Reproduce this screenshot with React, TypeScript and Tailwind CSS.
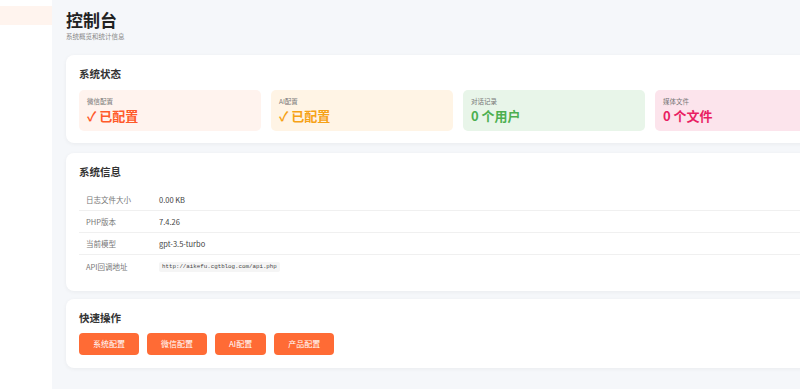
const stats = [
  { label: '微信配置', value: '✓ 已配置', box: 'bg-[#fff3ee]', text: 'text-[#ff5a2a]' },
  { label: 'AI配置', value: '✓ 已配置', box: 'bg-[#fff4e5]', text: 'text-[#f6a216]' },
  { label: '对话记录', value: '0 个用户', box: 'bg-[#e8f5e9]', text: 'text-[#4caf50]' },
  { label: '媒体文件', value: '0 个文件', box: 'bg-[#fce4ec]', text: 'text-[#e91e63]' },
];

const info = [
  { label: '日志文件大小', value: '0.00 KB' },
  { label: 'PHP版本', value: '7.4.26' },
  { label: '当前模型', value: 'gpt-3.5-turbo' },
];

const actions = ['系统配置', '微信配置', 'AI配置', '产品配置'];

export default function App() {
  return (
    <div
      className="w-[800px] h-[389px] overflow-hidden bg-[#f5f7fa]"
      style={{ fontFamily: '"Noto Sans CJK SC", "Noto Sans", sans-serif' }}
    >
      <div className="flex w-[864px] h-full">
        {/* sidebar */}
        <aside className="w-[52px] shrink-0 bg-white pt-[6px]">
          <div className="h-[19px] bg-[#fff4ee]" />
        </aside>

        {/* main */}
        <main className="flex-1 px-[14px] pt-[10px]">
          <h1 className="text-[17px] font-bold text-[#222] leading-[20px]">控制台</h1>
          <p className="text-[6.5px] text-[#888] mt-[1px] leading-[10px]">系统概览和统计信息</p>

          <section className="mt-[14px] bg-white rounded-[8px] shadow-[0_1px_4px_rgba(0,0,0,0.05)] px-[13px] pt-[12px] pb-[12px]">
            <h2 className="text-[10.5px] font-bold text-[#333] leading-[14px]">系统状态</h2>
            <div className="mt-[9px] grid grid-cols-4 gap-[10px]">
              {stats.map((s) => (
                <div key={s.label} className={`h-[41px] rounded-[5px] ${s.box} px-[8px] pt-[7px]`}>
                  <div className="text-[6.5px] text-[#777] leading-[9px]">{s.label}</div>
                  <div className={`text-[13px] font-bold leading-[17px] mt-[1px] ${s.text}`}>{s.value}</div>
                </div>
              ))}
            </div>
          </section>

          <section className="mt-[10px] bg-white rounded-[8px] shadow-[0_1px_4px_rgba(0,0,0,0.05)] px-[13px] pt-[12px] pb-[12px]">
            <h2 className="text-[10.5px] font-bold text-[#333] leading-[14px]">系统信息</h2>
            <div className="mt-[10px]">
              {info.map((r) => (
                <div key={r.label} className="flex items-center h-[22px] border-b border-[#f0f0f0] px-[7px]">
                  <span className="w-[73px] text-[7.5px] text-[#777]">{r.label}</span>
                  <span className="text-[7.5px] text-[#444]">{r.value}</span>
                </div>
              ))}
              <div className="flex items-center h-[24px] px-[7px]">
                <span className="w-[73px] text-[7.5px] text-[#777]">API回调地址</span>
                <code
                  className="text-[5.8px] text-[#444] bg-[#f5f5f5] px-[3px] py-[1px] rounded-[2px]"
                  style={{ fontFamily: '"Liberation Mono", monospace' }}
                >
                  http://aikefu.cgtblog.com/api.php
                </code>
              </div>
            </div>
          </section>

          <section className="mt-[8px] bg-white rounded-[8px] shadow-[0_1px_4px_rgba(0,0,0,0.05)] px-[13px] pt-[12px] pb-[13px]">
            <h2 className="text-[10.5px] font-bold text-[#333] leading-[14px]">快速操作</h2>
            <div className="mt-[8px] flex gap-[8px]">
              {actions.map((a) => (
                <button
                  key={a}
                  className="h-[22px] px-[14px] rounded-[4px] bg-[#ff6b35] text-white text-[8px]"
                >
                  {a}
                </button>
              ))}
            </div>
          </section>
        </main>
      </div>
    </div>
  );
}
